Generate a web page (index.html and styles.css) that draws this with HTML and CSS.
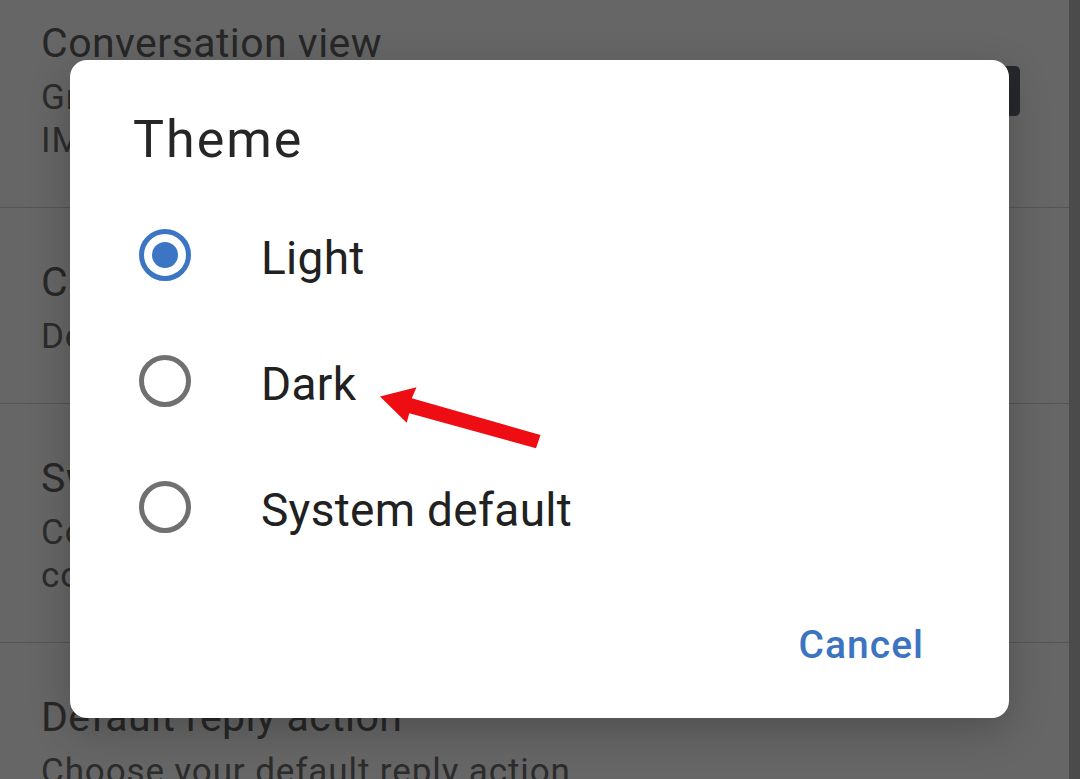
FILE: index.html
```html
<!DOCTYPE html>
<html lang="en">
<head>
<meta charset="utf-8">
<title>Theme</title>
<link rel="stylesheet" href="styles.css">
</head>
<body>
<div class="screen">
  <main class="settings">
    <div class="item">
      <div class="item-text">
        <div class="item-title">Conversation view</div>
        <div class="item-sub">Group emails with the same topic together for<br>IMAP, POP3 and Exchange</div>
      </div>
      <div class="checkbox"></div>
    </div>
    <div class="item">
      <div class="item-text">
        <div class="item-title">Conversation list density</div>
        <div class="item-sub">Default</div>
      </div>
    </div>
    <div class="item">
      <div class="item-text">
        <div class="item-title">Swipe actions</div>
        <div class="item-sub">Configure swipe actions to quickly act on emails in the<br>conversation list</div>
      </div>
    </div>
    <div class="item">
      <div class="item-text">
        <div class="item-title">Default reply action</div>
        <div class="item-sub">Choose your default reply action</div>
      </div>
    </div>
  </main>
  <div class="scrollbar"></div>

  <div class="dialog">
    <div class="dialog-title">Theme</div>
    <div class="options">
      <div class="option">
        <span class="radio radio-on"></span>
        <span class="option-label">Light</span>
      </div>
      <div class="option">
        <span class="radio"></span>
        <span class="option-label">Dark</span>
      </div>
      <div class="option">
        <span class="radio"></span>
        <span class="option-label">System default</span>
      </div>
    </div>
    <div class="actions">
      <span class="btn">Cancel</span>
    </div>
  </div>

  <svg class="arrow" width="1080" height="779" viewBox="0 0 1080 779" xmlns="http://www.w3.org/2000/svg">
    <polygon points="380,396.5 416.5,387.3 411.8,398.3 540.5,435 536,448.3 409.3,413.3 406.7,422.7" fill="#ee0d12"/>
  </svg>
</div>
</body>
</html>
```

FILE: styles.css
```css
html, body {
  margin: 0;
  padding: 0;
}

body {
  font-family: Roboto, "Noto Sans", "Liberation Sans", sans-serif;
  background: #666666;
}

.screen {
  position: relative;
  display: flex;
  width: 1080px;
  height: 779px;
  overflow: hidden;
  background: #666666;
}

.settings {
  flex: 1;
  margin-top: -31px;
}

.item {
  display: flex;
  align-items: center;
  padding: 50px 49px 45px 41px;
  border-bottom: 1px solid #555555;
}

.item-text {
  flex: 1;
}

.item-title {
  font-size: 41px;
  line-height: 48px;
  letter-spacing: 0.45px;
  color: #272727;
  margin-bottom: 9px;
  white-space: nowrap;
}

.item-sub {
  font-size: 35px;
  line-height: 43px;
  letter-spacing: 0.9px;
  color: #2c2c2c;
  white-space: nowrap;
}

.checkbox {
  width: 49px;
  height: 50px;
  border-radius: 5px;
  background: #26282d;
}

.scrollbar {
  width: 11px;
  flex: none;
  background: #4b4b4b;
}

.dialog {
  position: absolute;
  left: 70px;
  top: 60px;
  width: 939px;
  background: #ffffff;
  border-radius: 17px;
  box-shadow: 0 12px 40px rgba(0, 0, 0, 0.22);
  padding: 49px 0 50px 0;
  box-sizing: border-box;
}

.dialog-title {
  font-size: 52px;
  line-height: 62px;
  letter-spacing: 2px;
  color: #262626;
  padding-left: 63px;
}

.options {
  margin-top: 21px;
  padding-left: 69px;
}

.option {
  display: flex;
  align-items: center;
  height: 126px;
}

.radio {
  width: 52px;
  height: 52px;
  box-sizing: border-box;
  border-radius: 50%;
  border: 5px solid #707070;
  display: flex;
  align-items: center;
  justify-content: center;
  flex: none;
}

.radio-on {
  border-color: #3b75c4;
}

.radio-on::after {
  content: "";
  width: 26px;
  height: 26px;
  border-radius: 50%;
  background: #3b75c4;
}

.option-label {
  margin-left: 70px;
  margin-top: 6px;
  font-size: 46px;
  line-height: 52px;
  letter-spacing: 0.3px;
  color: #212121;
}

.actions {
  display: flex;
  justify-content: flex-end;
  margin-top: 52px;
  padding-right: 85px;
}

.btn {
  font-size: 39px;
  line-height: 46px;
  font-weight: 500;
  letter-spacing: 1px;
  color: #3d74c2;
}

.arrow {
  position: absolute;
  left: 0;
  top: 0;
  pointer-events: none;
}
```
